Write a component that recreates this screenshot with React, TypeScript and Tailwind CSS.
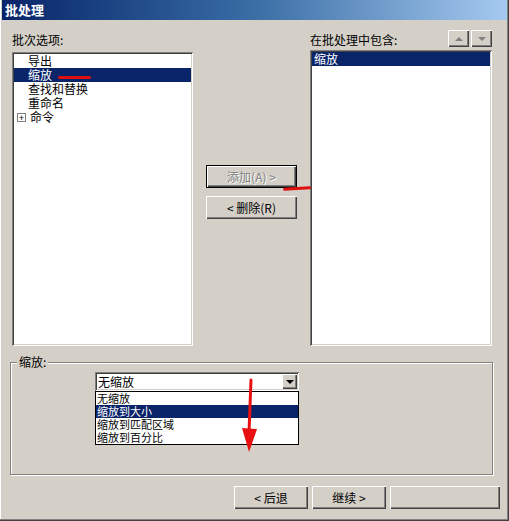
import { useState } from 'react';

const font = { fontFamily: '"Noto Sans CJK SC", "Liberation Sans", sans-serif' };

const sunken =
  'shadow-[inset_1px_1px_0_#808080,inset_-1px_-1px_0_#ffffff,inset_2px_2px_0_#404040,inset_-2px_-2px_0_#d4d0c8]';
const raised =
  'shadow-[inset_1px_1px_0_#ffffff,inset_-1px_-1px_0_#404040,inset_-2px_-2px_0_#808080]';

export default function App() {
  const [selected] = useState('缩放');

  const options = ['导出', '缩放', '查找和替换', '重命名'];
  const scaleModes = ['无缩放', '缩放到大小', '缩放到匹配区域', '缩放到百分比'];

  return (
    <div
      className="relative w-[509px] h-[521px] bg-[#d4d0c8] text-[12px] leading-[14px] text-black overflow-hidden shadow-[inset_-1px_-1px_0_#404040,inset_-2px_-2px_0_#808080,inset_1px_0_0_#ffffff]"
      style={font}
    >
      {/* Title bar */}
      <div className="h-[20px] mx-[2px] bg-gradient-to-r from-[#0a246a] via-[#3a6ea5] to-[#a6caf0] flex items-center px-[3px]">
        <span className="text-white font-bold text-[13px]">批处理</span>
      </div>

      {/* Lists */}
      <div className="flex pl-[12px] pt-[10px]">
        {/* Left column */}
        <div className="w-[181px] flex flex-col">
          <div className="h-[22px] pt-[3px]">批次选项:</div>
          <div className={`h-[294px] bg-white p-[2px] ${sunken}`}>
            {options.map((o) => (
              <div
                key={o}
                className={`h-[14px] pl-[14px] ${o === selected ? 'bg-[#0a246a] text-white' : ''}`}
              >
                {o}
              </div>
            ))}
            <div className="h-[14px] flex items-center gap-[4px] pl-[3px]">
              <span className="w-[9px] h-[9px] border border-[#808080] flex items-center justify-center text-[9px] leading-none">
                +
              </span>
              <span>命令</span>
            </div>
          </div>
        </div>

        {/* Middle buttons */}
        <div className="w-[117px] flex flex-col items-center pt-[135px] gap-[8px]">
          <div className="w-[91px] h-[23px] border border-black flex items-center justify-center bg-[#d4d0c8]">
            <div className={`w-full h-full flex items-center justify-center text-[#808080] [text-shadow:1px_1px_0_#ffffff] ${raised}`}>
              添加(A) &gt;
            </div>
          </div>
          <div className={`w-[91px] h-[23px] flex items-center justify-center ${raised}`}>
            &lt; 删除(R)
          </div>
        </div>

        {/* Right column */}
        <div className="w-[182px] flex flex-col">
          <div className="h-[20px] flex items-start justify-between">
            <span className="pt-[3px]">在批处理中包含:</span>
            <div className="flex gap-[2px]">
              <div className={`w-[21px] h-[17px] flex items-center justify-center ${raised}`}>
                <span className="w-0 h-0 border-x-[4px] border-x-transparent border-b-[4px] border-b-[#808080]" />
              </div>
              <div className={`w-[21px] h-[17px] flex items-center justify-center ${raised}`}>
                <span className="w-0 h-0 border-x-[4px] border-x-transparent border-t-[4px] border-t-[#808080]" />
              </div>
            </div>
          </div>
          <div className={`h-[296px] bg-white p-[2px] ${sunken}`}>
            <div className="h-[14px] pl-[2px] bg-[#0a246a] text-white">缩放</div>
          </div>
        </div>
      </div>

      {/* Group box */}
      <div className="relative ml-[10px] mt-[16px] w-[483px] h-[113px] border border-[#808080] shadow-[1px_1px_0_#ffffff,inset_1px_1px_0_#ffffff]">
        <span className="absolute -top-[8px] left-[6px] bg-[#d4d0c8] px-[2px]">缩放:</span>
        <div className="ml-[84px] mt-[9px] w-[204px]">
          <div className={`h-[19px] bg-white flex items-center p-[2px] ${sunken}`}>
            <span className="flex-1 pl-[1px]">无缩放</span>
            <div className={`w-[15px] h-[15px] bg-[#d4d0c8] flex items-center justify-center ${raised}`}>
              <span className="w-0 h-0 border-x-[4px] border-x-transparent border-t-[4px] border-t-black" />
            </div>
          </div>
          <div className="border border-black bg-white">
            {scaleModes.map((m) => (
              <div
                key={m}
                className={`h-[13px] leading-[13px] text-[11px] pl-[1px] ${m === '缩放到大小' ? 'bg-[#0a246a] text-white' : ''}`}
              >
                {m}
              </div>
            ))}
          </div>
        </div>
      </div>

      {/* Bottom buttons */}
      <div className="flex pl-[234px] mt-[11px] gap-[4px]">
        <div className={`w-[74px] h-[23px] flex items-center justify-center ${raised}`}>&lt; 后退</div>
        <div className={`w-[74px] h-[23px] flex items-center justify-center ${raised}`}>继续 &gt;</div>
        <div className={`w-[110px] h-[23px] ${raised}`} />
      </div>

      {/* Red annotations */}
      <div className="absolute left-[58px] top-[76px] w-[33px] h-[3px] rounded-full bg-[#e01010]" />
      <div className="absolute left-[283px] top-[187px] w-[28px] h-[3px] rounded-full bg-[#e01010] -rotate-3" />
      <svg className="absolute left-[238px] top-[378px]" width="24" height="76" viewBox="0 0 24 76">
        <path d="M13 2 L11 54" stroke="#e81010" strokeWidth="3" strokeLinecap="round" />
        <path d="M4 50 L19 51 L11 74 Z" fill="#e81010" />
      </svg>
    </div>
  );
}
